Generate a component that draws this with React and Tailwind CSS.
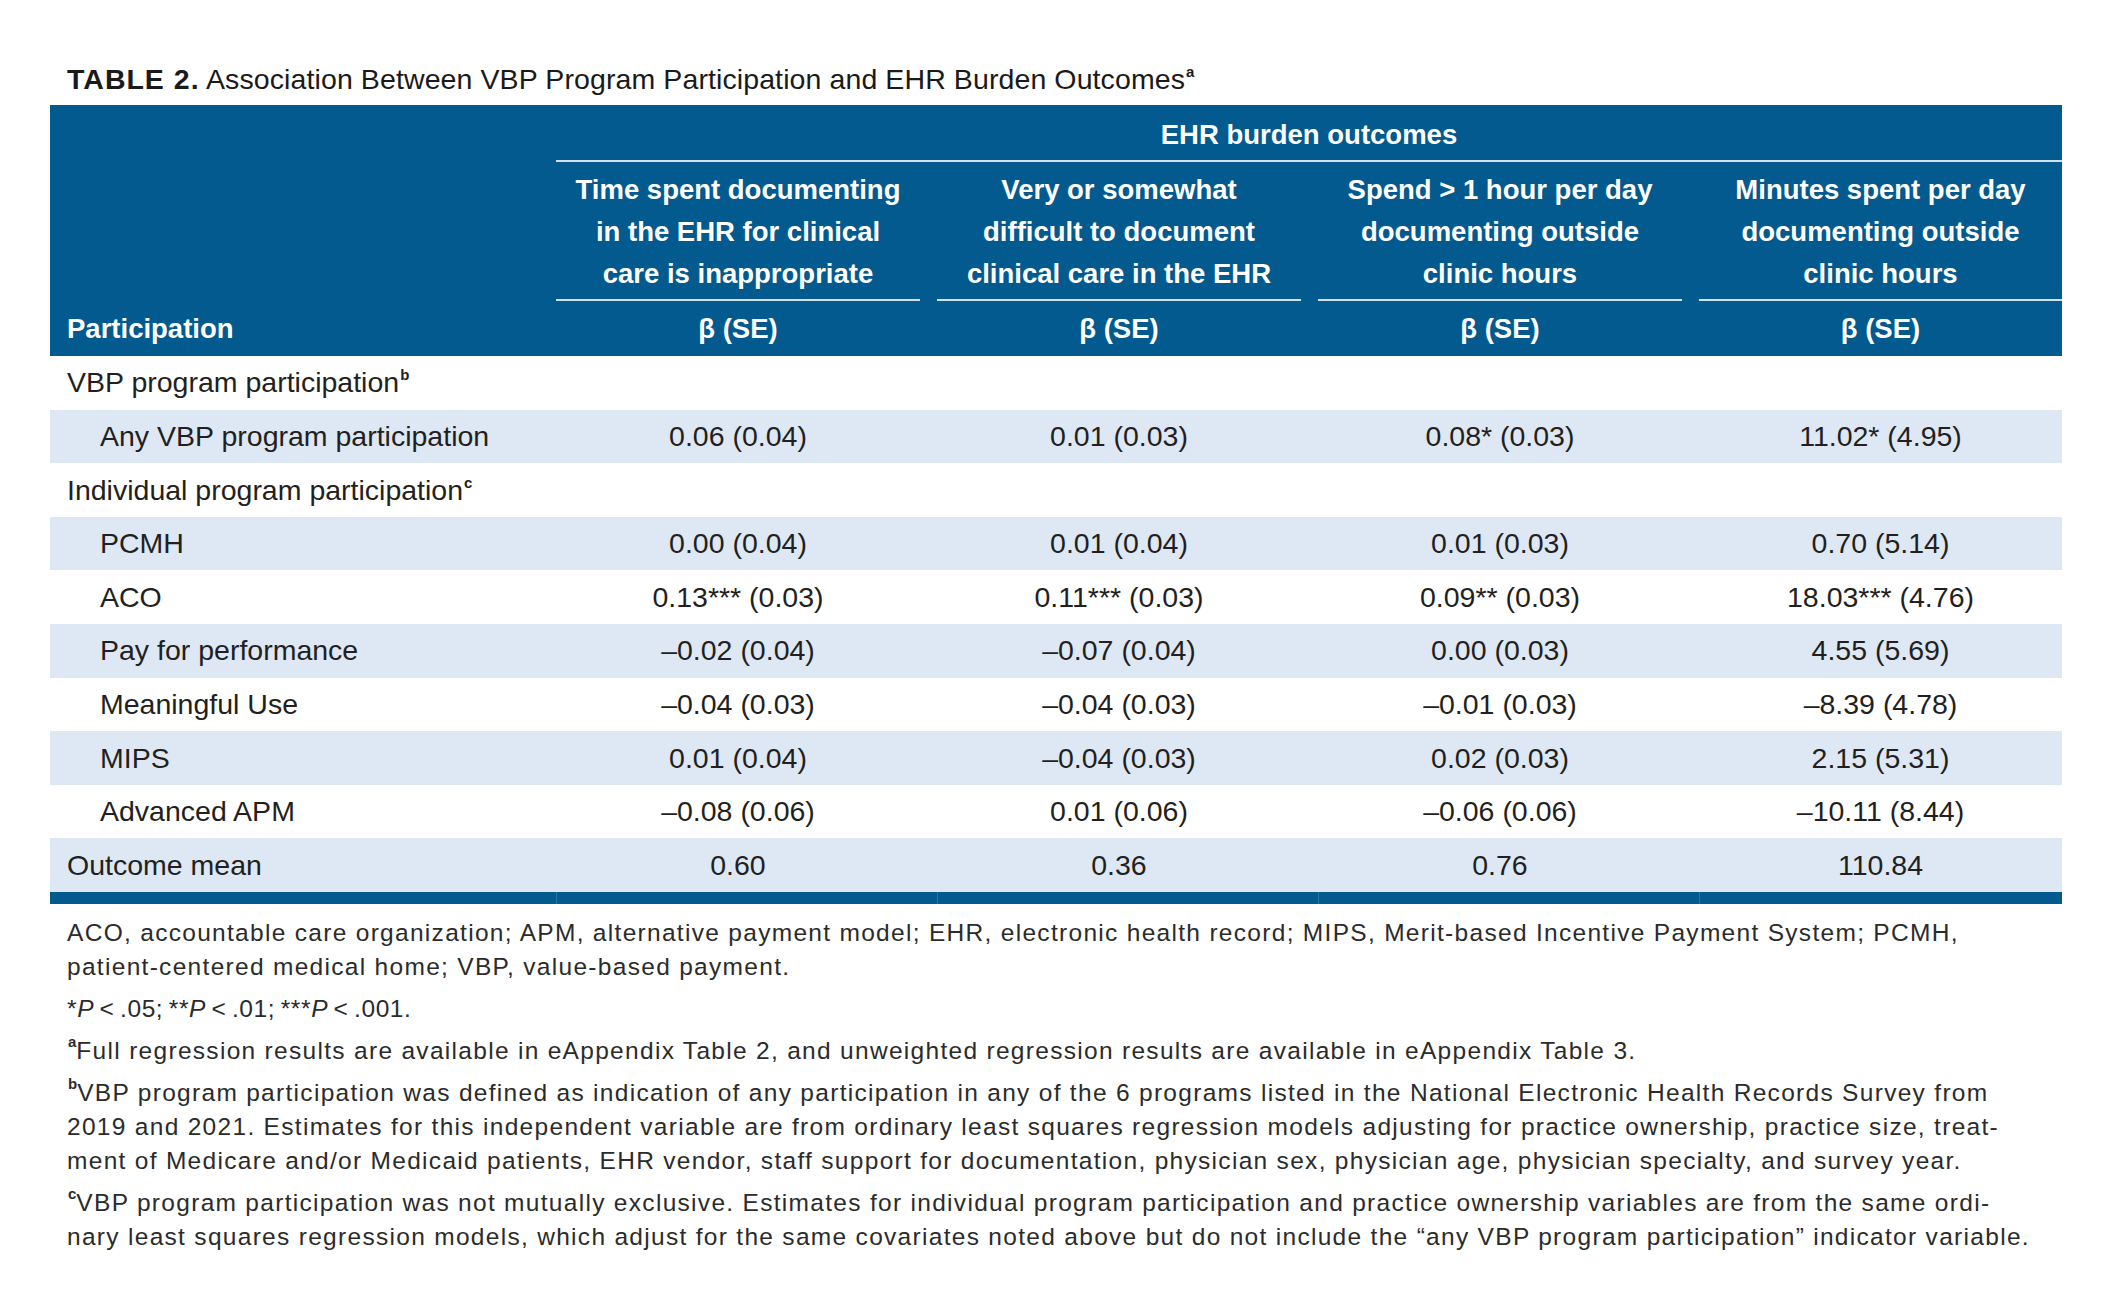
const cols = "grid grid-cols-[489px_381px_381px_381px_380px]";

const titles = [
  ["Time spent documenting", "in the EHR for clinical", "care is inappropriate"],
  ["Very or somewhat", "difficult to document", "clinical care in the EHR"],
  ["Spend > 1 hour per day", "documenting outside", "clinic hours"],
  ["Minutes spent per day", "documenting outside", "clinic hours"],
];

const rows = [
  { label: "VBP program participation", sup: "b" },
  { label: "Any VBP program participation", indent: true, vals: ["0.06 (0.04)", "0.01 (0.03)", "0.08* (0.03)", "11.02* (4.95)"] },
  { label: "Individual program participation", sup: "c" },
  { label: "PCMH", indent: true, vals: ["0.00 (0.04)", "0.01 (0.04)", "0.01 (0.03)", "0.70 (5.14)"] },
  { label: "ACO", indent: true, vals: ["0.13*** (0.03)", "0.11*** (0.03)", "0.09** (0.03)", "18.03*** (4.76)"] },
  { label: "Pay for performance", indent: true, vals: ["–0.02 (0.04)", "–0.07 (0.04)", "0.00 (0.03)", "4.55 (5.69)"] },
  { label: "Meaningful Use", indent: true, vals: ["–0.04 (0.03)", "–0.04 (0.03)", "–0.01 (0.03)", "–8.39 (4.78)"] },
  { label: "MIPS", indent: true, vals: ["0.01 (0.04)", "–0.04 (0.03)", "0.02 (0.03)", "2.15 (5.31)"] },
  { label: "Advanced APM", indent: true, vals: ["–0.08 (0.06)", "0.01 (0.06)", "–0.06 (0.06)", "–10.11 (8.44)"] },
  { label: "Outcome mean", vals: ["0.60", "0.36", "0.76", "110.84"] },
];

function Sup({ children }) {
  return <sup className="text-[15px] font-bold -top-[0.8em] ml-[1px] tracking-normal">{children}</sup>;
}

export default function App() {
  return (
    <div className="w-[2113px] h-[1310px] bg-white pl-[50px] pt-[62px] font-['Liberation_Sans',Arial,sans-serif] text-[#231f20]">
      <div className="pl-[17px] text-[28.5px] leading-[34px] h-[43px] text-[#1a1a1a] whitespace-nowrap tracking-[0.1px]">
        <span className="font-bold tracking-[1px]">TABLE 2.</span> Association Between VBP Program Participation and EHR Burden Outcomes
        <Sup>a</Sup>
      </div>

      <div className="w-[2012px]">
        <div className="bg-[#035a8e] text-white font-bold text-[27.5px]">
          <div className={cols}>
            <div />
            <div className="col-span-4 pl-[17px]">
              <div className="h-[57px] pt-[4px] flex items-center justify-center border-b-2 border-[#d3e1ec]">
                EHR burden outcomes
              </div>
            </div>
          </div>
          <div className={cols}>
            <div />
            {titles.map((t, i) => (
              <div key={i} className="pl-[17px]">
                <div className="pt-[7px] pb-[4px] leading-[42px] text-center border-b-2 border-[#d3e1ec] whitespace-nowrap">
                  {t.map((line, j) => (
                    <div key={j}>{line}</div>
                  ))}
                </div>
              </div>
            ))}
          </div>
          <div className={cols + " h-[55px] items-center"}>
            <div className="pl-[17px]">Participation</div>
            {titles.map((_, i) => (
              <div key={i} className="pl-[17px] text-center">β (SE)</div>
            ))}
          </div>
        </div>

        {rows.map((r, i) => (
          <div
            key={i}
            className={cols + " h-[53.6px] items-center text-[28.5px] " + (i % 2 === 1 ? "bg-[#dde8f4]" : "bg-white")}
          >
            <div className={r.indent ? "pl-[50px] whitespace-nowrap" : "pl-[17px] whitespace-nowrap"}>
              {r.label}
              {r.sup && <Sup>{r.sup}</Sup>}
            </div>
            {(r.vals || ["", "", "", ""]).map((v, j) => (
              <div key={j} className="pl-[17px] text-center whitespace-nowrap">{v}</div>
            ))}
          </div>
        ))}

        <div className={cols + " h-[12px] bg-[#035a8e]"}>
          <div />
          {titles.map((_, i) => (
            <div key={i} className="pl-[17px] h-full">
              <div className="h-full border-l border-[#2a729f]" />
            </div>
          ))}
        </div>
      </div>

      <div className="pl-[17px] pt-[12px] text-[24.5px] tracking-[1.3px] leading-[34px] text-[#2b2b2b] whitespace-nowrap flex flex-col gap-[8px]">
        <div>
          <div>ACO, accountable care organization; APM, alternative payment model; EHR, electronic health record; MIPS, Merit-based Incentive Payment System; PCMH,</div>
          <div>patient-centered medical home; VBP, value-based payment.</div>
        </div>
        <div className="tracking-[0.6px]">
          *<i>P</i>{"\u2009<\u2009"}.05;{"\u2009"}**<i>P</i>{"\u2009<\u2009"}.01;{"\u2009"}***<i>P</i>{"\u2009<\u2009"}.001.
        </div>
        <div>
          <Sup>a</Sup>Full regression results are available in eAppendix Table 2, and unweighted regression results are available in eAppendix Table 3.
        </div>
        <div>
          <div>
            <Sup>b</Sup>VBP program participation was defined as indication of any participation in any of the 6 programs listed in the National Electronic Health Records Survey from
          </div>
          <div>2019 and 2021. Estimates for this independent variable are from ordinary least squares regression models adjusting for practice ownership, practice size, treat-</div>
          <div>ment of Medicare and/or Medicaid patients, EHR vendor, staff support for documentation, physician sex, physician age, physician specialty, and survey year.</div>
        </div>
        <div>
          <div>
            <Sup>c</Sup>VBP program participation was not mutually exclusive. Estimates for individual program participation and practice ownership variables are from the same ordi-
          </div>
          <div>nary least squares regression models, which adjust for the same covariates noted above but do not include the “any VBP program participation” indicator variable.</div>
        </div>
      </div>
    </div>
  );
}
